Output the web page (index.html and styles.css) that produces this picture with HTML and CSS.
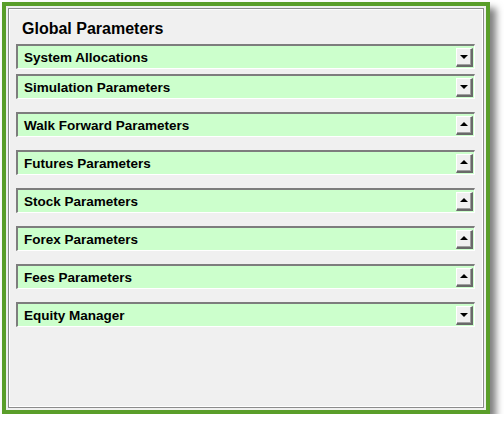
FILE: index.html
```html
<!DOCTYPE html>
<html>
<head>
<meta charset="utf-8">
<link rel="stylesheet" href="styles.css">
</head>
<body>
<div class="frame">
  <div class="panel">
    <div class="title">Global Parameters</div>
    <div class="rows">
      <div class="row first"><span class="label">System Allocations</span><span class="btn down"></span></div>
      <div class="row"><span class="label">Simulation Parameters</span><span class="btn down"></span></div>
      <div class="row"><span class="label">Walk Forward Parameters</span><span class="btn up"></span></div>
      <div class="row"><span class="label">Futures Parameters</span><span class="btn up"></span></div>
      <div class="row"><span class="label">Stock Parameters</span><span class="btn up"></span></div>
      <div class="row"><span class="label">Forex Parameters</span><span class="btn up"></span></div>
      <div class="row"><span class="label">Fees Parameters</span><span class="btn up"></span></div>
      <div class="row"><span class="label">Equity Manager</span><span class="btn down"></span></div>
    </div>
  </div>
</div>
</body>
</html>
```
FILE: styles.css
```css
html, body {
  margin: 0;
  padding: 0;
  background: #ffffff;
}
body {
  padding: 2px 0 0 2px;
  font-family: Arial, "Liberation Sans", sans-serif;
}
.frame {
  box-sizing: border-box;
  width: 488px;
  height: 412px;
  border: 4px solid #5a9e2a;
  background: #f0f0f0;
  padding: 2px;
  box-shadow: 6px 6px 7px rgba(0,0,0,0.5);
}
.panel {
  box-sizing: border-box;
  height: 100%;
  border: 1px solid #8c8c8c;
  box-shadow: inset 1px 1px 0 #ffffff, inset -1px -1px 0 #ffffff;
  background: #f0f0f0;
  padding: 0 8px 0 7px;
}
.title {
  font-weight: bold;
  font-size: 16px;
  color: #000;
  height: 35px;
  line-height: 18px;
  padding: 11px 0 0 6px;
  box-sizing: border-box;
}
.rows {
  display: flex;
  flex-direction: column;
  gap: 13px;
}
.row {
  box-sizing: border-box;
  height: 25px;
  display: flex;
  align-items: center;
  justify-content: space-between;
  background: #ccffcc;
  border-top: 2px solid #7d7d7d;
  border-left: 2px solid #7d7d7d;
  border-bottom: 1px solid #ffffff;
  border-right: 1px solid #ffffff;
  padding: 0 1px 0 6px;
}
.row.first {
  margin-bottom: -8px;
}
.label {
  font-weight: bold;
  font-size: 13.5px;
  color: #000;
  margin-top: 1px;
}
.btn {
  box-sizing: border-box;
  width: 17px;
  height: 19px;
  margin-top: 1px;
  background: #f0f0f0;
  border-top: 1px solid #ffffff;
  border-left: 1px solid #ffffff;
  border-right: 2px solid #696969;
  border-bottom: 2px solid #696969;
  box-shadow: inset -1px -1px 0 #a0a0a0;
  position: relative;
}
.btn::after {
  content: "";
  position: absolute;
  left: 3px;
  width: 0;
  height: 0;
  border-left: 4px solid transparent;
  border-right: 4px solid transparent;
}
.btn.down::after {
  top: 6px;
  border-top: 4px solid #000;
}
.btn.up::after {
  top: 5px;
  border-bottom: 4px solid #000;
}
```
